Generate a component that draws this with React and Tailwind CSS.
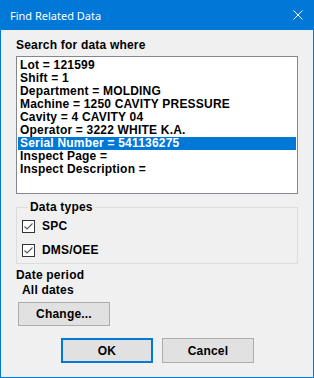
import React from "react";

const items = [
  "Lot = 121599",
  "Shift = 1",
  "Department = MOLDING",
  "Machine = 1250 CAVITY PRESSURE",
  "Cavity = 4 CAVITY 04",
  "Operator = 3222 WHITE K.A.",
  "Serial Number = 541136275",
  "Inspect Page =",
  "Inspect Description =",
];

const font = { fontFamily: '"Liberation Sans", Arial, sans-serif' };

function Check({ label }) {
  return (
    <label className="flex items-center h-[13px]">
      <span className="w-[13px] h-[13px] border border-[#333333] bg-white flex items-center justify-center">
        <svg width="11" height="11" viewBox="0 0 11 11">
          <path d="M1.5 5.5 L4 8 L9.5 2.5" fill="none" stroke="#555555" strokeWidth="1.1" />
        </svg>
      </span>
      <span className="ml-[7px] font-bold text-[12px] tracking-[0.2px] leading-[13px] text-black">{label}</span>
    </label>
  );
}

export default function App() {
  return (
    <div
      className="w-[314px] h-[378px] flex flex-col bg-[#f0f0f0] border-x border-b border-[#0078d7] select-none"
      style={font}
    >
      {/* Title bar */}
      <div className="h-[30px] -mx-px bg-[#0078d7] flex items-center justify-between pl-[10px] pr-[11px]">
        <span
          className="text-white text-[11px] leading-none"
          style={{ fontFamily: '"Noto Sans", "Open Sans", sans-serif' }}
        >
          Find Related Data
        </span>
        <svg width="10" height="10" viewBox="0 0 10 10">
          <path d="M0.5 0.5 L9.5 9.5 M9.5 0.5 L0.5 9.5" stroke="white" strokeWidth="1" />
        </svg>
      </div>

      <div className="flex-1 flex flex-col px-[15px] pt-[9px] text-black text-[12px] tracking-[0.2px]">
        <div className="font-bold leading-[13px]">Search for data where</div>

        {/* List box */}
        <div className="mt-[4px] h-[138px] border border-[#828790] bg-white p-px">
          <ul className="pt-[1px]">
            {items.map((it, i) => (
              <li
                key={i}
                className={`h-[13px] leading-[13px] px-[2px] font-bold whitespace-nowrap ${
                  i === 6 ? "bg-[#0078d7] text-white" : "text-black"
                }`}
              >
                {it}
              </li>
            ))}
          </ul>
        </div>

        {/* Data types group */}
        <fieldset className="mt-[7px] border border-[#dcdcdc] pl-[5px] pt-[6px] pb-[6px]">
          <legend className="ml-[6px] px-[2px] font-bold leading-[13px]">Data types</legend>
          <div className="flex flex-col gap-[11px]">
            <Check label="SPC" />
            <Check label="DMS/OEE" />
          </div>
        </fieldset>

        <div className="mt-[5px] font-bold leading-[13px]">Date period</div>
        <div className="mt-[2px] ml-[6px] font-bold leading-[13px]">All dates</div>

        <button className="mt-[5px] ml-[2px] w-[92px] h-[24px] bg-[#e1e1e1] border border-[#adadad] font-bold">
          Change...
        </button>

        <div className="mt-[12px] flex justify-center gap-[9px] pl-[1px]">
          <button className="w-[92px] h-[25px] bg-[#e1e1e1] border-2 border-[#0078d7] font-bold">
            OK
          </button>
          <button className="w-[92px] h-[25px] bg-[#e1e1e1] border border-[#adadad] font-bold">
            Cancel
          </button>
        </div>
      </div>
    </div>
  );
}
